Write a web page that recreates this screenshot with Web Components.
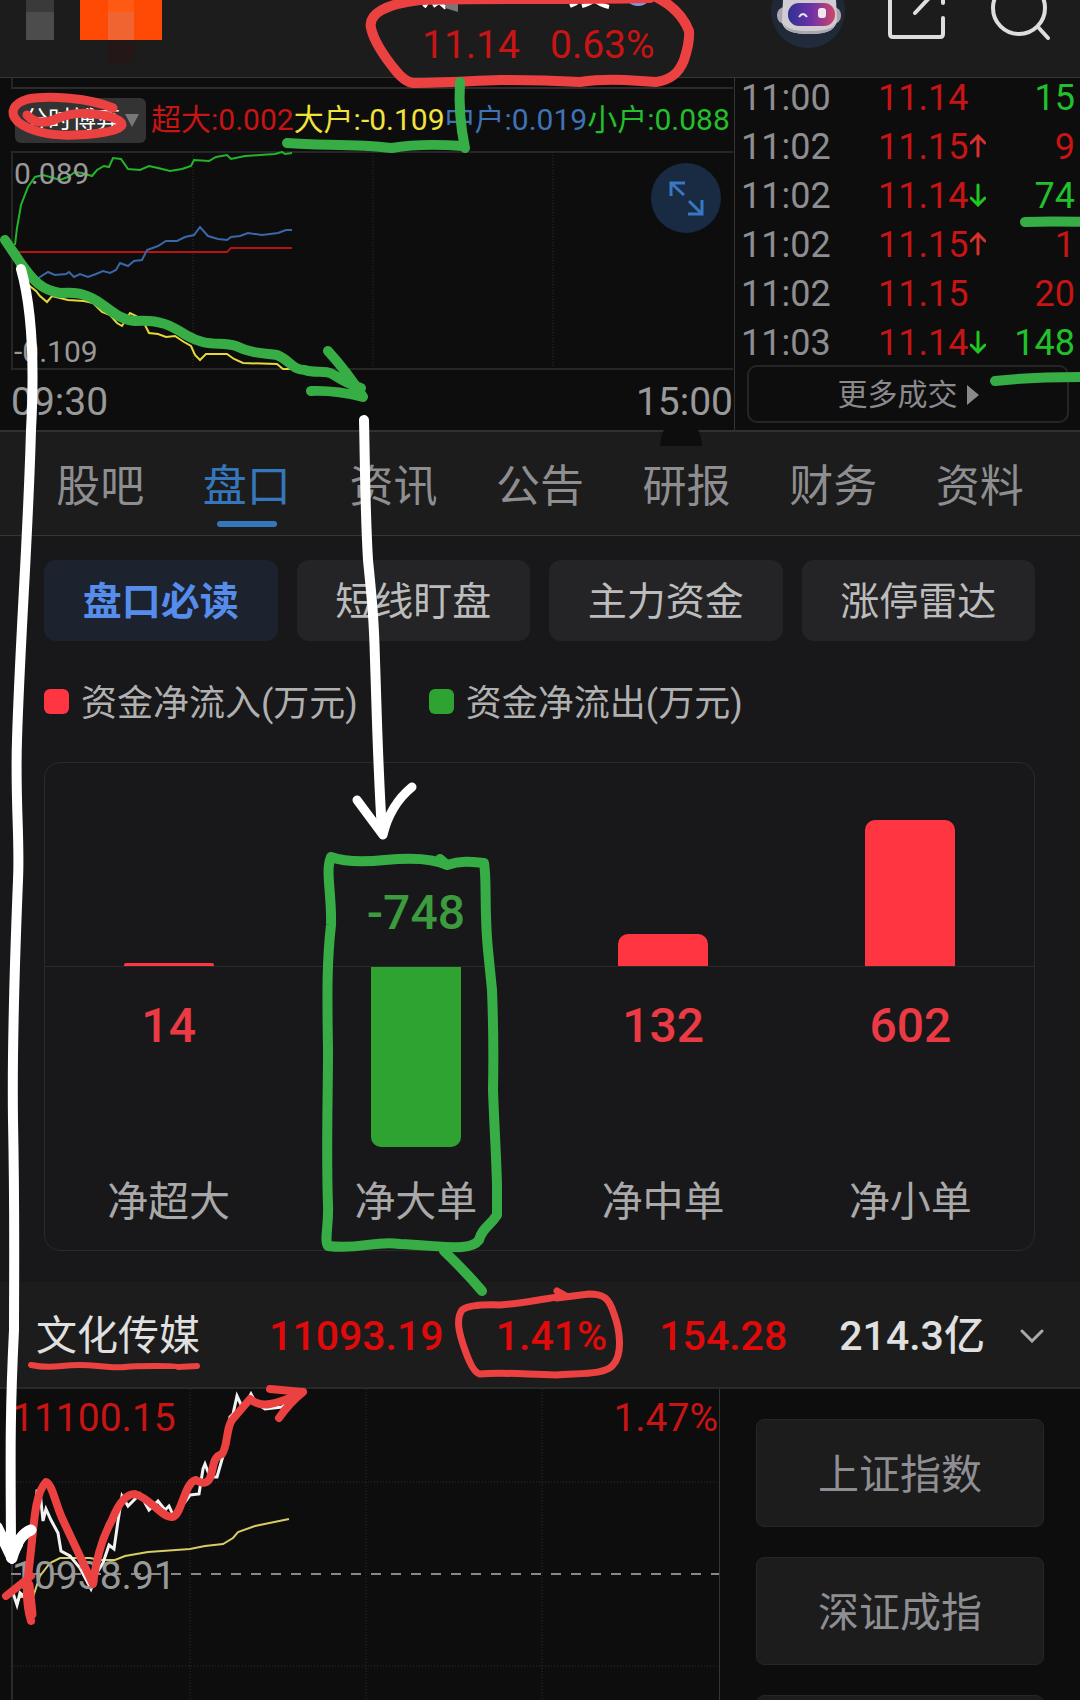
<!DOCTYPE html>
<html lang="zh-CN">
<head>
<meta charset="utf-8">
<meta name="viewport" content="width=device-width, initial-scale=1">
<title>盘口</title>
<style>
  html, body { margin: 0; height: 100%; }
  body {
    background: #18181a;
    color: #b0b0b0;
    font-family: Roboto, "Noto Sans CJK SC", sans-serif;
    overflow: hidden;
    --up: #c81414;
    --down: #22c02a;
    --line: #2e2e2e;
    --panel: #1c1c1c;
    --deep: #0d0d0d;
  }
</style>
</head>
<body>
<stock-page></stock-page>

<script>
const base = `
  *, *::before, *::after { box-sizing: border-box; }
  button, select { font: inherit; color: inherit; background: none; border: 0; margin: 0; padding: 0; appearance: none; cursor: pointer; }
  svg { display: block; }
`;

function element(name, css, html) {
  customElements.define(name, class extends HTMLElement {
    constructor() {
      super();
      const root = this.attachShadow({ mode: "open" });
      const t = document.createElement("template");
      t.innerHTML = `<style>${base}${css}</style>${typeof html === "function" ? html(this) : html}`;
      root.append(t.content.cloneNode(true));
    }
  });
}

/* Top bar: avatar blocks, price, actions */
element("quote-header", `
  :host { display: block; background: var(--panel); border-bottom: 1px solid #353535; }
  header { display: flex; align-items: flex-start; height: 77px; padding: 0 28px 0 26px; }
  .logo { flex: none; width: 136px; height: 66px; }
  .quote { flex: 1; display: flex; gap: 30px; padding: 25px 0 0 260px; font-size: 39px; line-height: 40px; color: var(--up); white-space: nowrap; }
  .actions { display: flex; align-items: flex-start; gap: 40px; }
`, `
  <header>
    <svg class="logo" viewBox="26 0 136 66" aria-hidden="true">
      <path fill="#3a3a3a" d="M26 0h28v12H26z"/><path fill="#4c4c4c" d="M26 12h28v28H26z"/>
      <path fill="#ff4a05" d="M80 0h82v40H80z"/><path fill="#ff5a14" d="M108 0h26v12h-26z"/><path fill="#f06432" d="M108 12h26v28h-26z"/>
      <path fill="#231817" d="M108 40h26v20l-26 6z"/>
    </svg>
    <div class="quote"><span>11.14</span><span>0.63%</span></div>
    <div class="actions">
      <button aria-label="助手">
        <svg width="76" height="50" viewBox="770 0 76 50">
          <defs>
            <linearGradient id="v"><stop offset="0" stop-color="#2f3192"/><stop offset=".5" stop-color="#6f33a8"/><stop offset="1" stop-color="#cf4668"/></linearGradient>
            <linearGradient id="c" x2="0" y2="1"><stop offset="0" stop-color="#1f2430"/><stop offset="1" stop-color="#212b3c"/></linearGradient>
          </defs>
          <circle cx="808" cy="11" r="37" fill="url(#c)"/>
          <rect x="777" y="7" width="64" height="17" rx="8" fill="#aaa6b0"/>
          <path fill="#d0ccd2" d="M783 0h53l1 18c0 11-8 16-28 16s-27-5-27-14z"/>
          <path fill="#aaa6ae" d="M784 24c4 6 12 7 25 7s22-1 26-7c-2 8-11 10-26 10s-24-3-25-10z"/>
          <rect x="788" y="3" width="47" height="23" rx="11" fill="url(#v)"/>
          <path d="M799 17q4-6 8 0" fill="none" stroke="#e8e4f6" stroke-width="2"/>
          <rect x="818" y="8" width="8" height="10" rx="3" fill="#f0e6f0"/>
        </svg>
      </button>
      <button aria-label="分享">
        <svg width="62" height="44" viewBox="886 0 62 44" fill="none" stroke="#dedede" stroke-width="4" stroke-linecap="round">
          <path d="M890-4V34q0 3 3 3h47q3 0 3-3V18M943-4V3M915 13 931-4"/>
        </svg>
      </button>
      <button aria-label="搜索">
        <svg width="64" height="44" viewBox="988 0 64 44" fill="none" stroke="#dedede" stroke-width="4" stroke-linecap="round">
          <circle cx="1019" cy="8" r="26"/><path d="m1038 27 10 11"/>
        </svg>
      </button>
    </div>
  </header>
`);

/* Intraday order-flow panel */
element("flow-panel", `
  :host { display: block; flex: 1; min-width: 0; padding: 0 1px 0 11px; }
  .tail { width: 100%; height: 11px; border-left: 2px solid #242424; border-bottom: 2px solid #2c2c2c; }
  .row { display: flex; align-items: center; height: 62px; padding-left: 4px; font-size: 30px; line-height: 40px; white-space: nowrap; }
  .pick { position: relative; flex: none; width: 131px; height: 45px; margin-right: 5px; background: #333; border-radius: 6px; }
  .pick select { width: 100%; height: 100%; padding-left: 9px; font-size: 24px; color: #fff; }
  .pick svg { position: absolute; right: 7px; top: 16px; pointer-events: none; }
  .plot { position: relative; height: 219px; }
  .plot > svg { width: 100%; height: 100%; }
  .plot path { vector-effect: non-scaling-stroke; }
  .mark { position: absolute; left: 3px; font-size: 30px; line-height: 32px; color: #999; }
  .hi { top: 7px; } .lo { bottom: 2px; }
  .zoom { position: absolute; right: 12px; top: 12px; }
  .axis { display: flex; justify-content: space-between; height: 60px; font-size: 39px; line-height: 64px; color: #999; }
`, `
  <div class="tail"></div>
  <div class="row">
    <div class="pick">
      <select aria-label="指标"><option>分时博弈</option></select>
      <svg width="14" height="13" viewBox="0 0 14 13" aria-hidden="true"><path fill="#777" d="M0 0h14L7 13z"/></svg>
    </div>
    <span style="color:#c81414">超大:0.002</span><span style="color:#f2e23c">大户:-0.109</span><span style="color:#3f73b5">中户:0.019</span><span style="color:#22c02a">小户:0.088</span>
  </div>
  <div class="plot">
    <svg viewBox="11 151 722 219" preserveAspectRatio="none" fill="none" aria-hidden="true">
      <path stroke="#262626" stroke-width="2" d="M733 152H12V369H733"/>
      <path stroke="#303030" stroke-dasharray="1 2" d="M193 152V369M373 152V369M553 152V369"/>
      <path stroke="#b81414" stroke-width="2" d="M15 252H227L231 248H292"/>
      <path stroke="#22b52a" stroke-width="2" d="M15 245 17 228 21 205 28 187 35 177 43 175 50 177 60 180 68 177 75 172 82 173 92 176 97 170 104 166 109 167 113 158 121 159 128 169 140 170 149 166 158 168 170 171 182 169 191 166 194 160 209 161 216 157 227 155 231 159 245 156 260 155 275 154 282 152 285 154 292 153"/>
      <path stroke="#3a67a6" stroke-width="2" d="M18 258 35 281 40 277 48 272 55 275 66 274 69 272 74 277 80 274 88 277 96 274 103 271 110 273 116 270 120 263 128 266 134 261 142 260 147 250 158 246 166 241 177 241 185 237 194 235 200 227 208 236 218 239 227 240 231 237 240 236 248 233 262 235 278 233 286 230 292 230"/>
      <path stroke="#e6d83a" stroke-width="2" d="M16 262 25 282 31 287 36 291 40 296 47 302 52 296 68 300 84 301 93 303 102 312 110 315 117 323 122 326 130 313 140 318 145 325 149 333 158 334 166 337 175 336 184 342 191 346 195 355 200 360 206 354 227 354 234 359 243 363 277 364 283 369 292 369"/>
    </svg>
    <span class="mark hi">0.089</span><span class="mark lo">-0.109</span>
    <button class="zoom" aria-label="全屏">
      <svg width="70" height="70" viewBox="0 0 70 70"><circle cx="35" cy="35" r="35" fill="#182b42"/>
      <path fill="none" stroke="#3877c2" stroke-width="3" d="M34 20H20V33M20 20 33 32M51 37V51H37M51 51 38 38"/></svg>
    </button>
  </div>
  <div class="axis"><span>09:30</span><span>15:00</span></div>
`);

/* Tick-by-tick trades */
const up = `<svg width="16" height="24" viewBox="0 0 16 24" fill="none" stroke="#d8312c" stroke-width="3" stroke-linecap="round"><path d="M8 22V3M1 9 8 2 15 9"/></svg>`;
const down = `<svg width="16" height="24" viewBox="0 0 16 24" fill="none" stroke="#1fc71f" stroke-width="3" stroke-linecap="round"><path d="M8 2V21M1 15 8 22 15 15"/></svg>`;
const trades = [
  ["11:00", "11.14", "", "15", "g"], ["11:02", "11.15", up, "9", "r"], ["11:02", "11.14", down, "74", "g"],
  ["11:02", "11.15", up, "1", "r"], ["11:02", "11.15", "", "20", "r"], ["11:03", "11.14", down, "148", "g"]
];
element("trade-list", `
  :host { display: block; flex: none; width: 346px; padding: 1px 5px 7px 6px; border-left: 1px solid #353535; }
  table { width: 100%; border-collapse: collapse; font-size: 36px; line-height: 38px; }
  td { padding: 0 0 11px; white-space: nowrap; }
  tr:last-child td { padding-bottom: 3px; }
  .t { width: 137px; color: #8e8e92; }
  .p { color: var(--up); }
  .p svg { display: inline-block; margin-left: 2px; vertical-align: 1px; }
  .q { text-align: right; }
  .g { color: var(--down); } .r { color: var(--up); }
  button { display: flex; align-items: center; justify-content: center; gap: 9px; width: calc(100% - 12px); height: 58px; margin: 0 6px; padding-top: 1px; border: 2px solid #252525; border-radius: 10px; font-size: 30px; line-height: 40px; color: #8a8a8d; }
`, `
  <table><tbody>${trades.map(([t, p, a, q, c]) => `<tr><td class="t">${t}</td><td class="p">${p}${a}</td><td class="q ${c}">${q}</td></tr>`).join("")}</tbody></table>
  <button>更多成交<svg width="12" height="20" viewBox="0 0 12 20" aria-hidden="true"><path fill="#8a8a8d" d="M0 0 12 10 0 20z"/></svg></button>
`);

/* Section tabs */
const tabs = ["股吧", "盘口", "资讯", "公告", "研报", "财务", "资料"];
element("section-tabs", `
  :host { display: block; position: relative; background: var(--panel); border-top: 2px solid #303030; border-bottom: 1px solid #353535; }
  nav { display: flex; padding: 0 27px; height: 103px; }
  button { flex: 1; display: flex; flex-direction: column; align-items: center; justify-content: flex-end; padding-bottom: 8px; gap: 8px; font-size: 44px; line-height: 52px; color: #8e8e91; white-space: nowrap; }
  button::after { content: ""; width: 60px; height: 6px; border-radius: 3px; }
  button.on { color: #3577bd; }
  button.on::after { background: #3577bd; }
  .notch { position: absolute; left: 61%; top: -2px; }
`, `
  <nav>${tabs.map((t, i) => `<button class="${i === 1 ? "on" : ""}">${t}</button>`).join("")}</nav>
  <svg class="notch" width="44" height="16" aria-hidden="true"><path fill="#0d0d0d" d="M5 0H39Q42 4 43 16H1Q2 4 5 0z"/></svg>
`);

element("pill-button", `
  :host { display: block; flex: 1; }
  button { width: 100%; height: 81px; padding-top: 2px; border-radius: 12px; background: #242426; color: #bcbcbc; font-size: 39px; line-height: 48px; white-space: nowrap; }
  :host([active]) button { background: #1c232e; color: #568cec; font-weight: 700; }
`, `<button><slot></slot></button>`);

element("legend-item", `
  :host { display: flex; align-items: center; gap: 12px; font-size: 36px; line-height: 44px; color: #b0b0b0; white-space: nowrap; }
  i { width: 25px; height: 25px; border-radius: 6px; background: var(--c); margin-bottom: 6px; }
`, `<i></i><span><slot></slot></span>`);

/* One column of the fund chart; the sign of value picks the direction */
element("fund-bar", `
  :host { display: flex; flex: 1; flex-direction: column; align-items: center; }
  .top, .bottom { display: flex; flex-direction: column; align-items: center; width: 100%; }
  .top { height: 204px; justify-content: flex-end; border-bottom: 1px solid #2a2a2c; }
  .bottom { height: 203px; }
  .bar { width: 90px; height: var(--h); border-radius: 10px 10px 0 0; background: #ff3541; }
  .thin { border-radius: 2px 2px 0 0; }
  .neg .bar { border-radius: 0 0 10px 10px; background: #2fa331; }
  b { font-size: 48px; line-height: 56px; font-weight: 500; color: #ec3a44; }
  .bottom b { margin-top: 31px; }
  .neg b { color: #3c9b3e; margin-bottom: 25px; }
  .name { padding: 8px 0 23px; font-size: 41px; line-height: 49px; color: #a9a9a9; white-space: nowrap; }
`, el => {
  const v = +el.getAttribute("value"), h = el.getAttribute("bar");
  const bar = `<div class="bar ${h < 10 ? "thin" : ""}" style="--h:${h}px"></div>`, n = `<b>${v}</b>`;
  return v < 0
    ? `<div class="top neg">${n}</div><div class="bottom neg">${bar}</div><div class="name"><slot></slot></div>`
    : `<div class="top">${bar}</div><div class="bottom">${n}</div><div class="name"><slot></slot></div>`;
});

element("fund-section", `
  :host { display: block; padding: 24px 45px 31px 44px; }
  .pills { display: flex; gap: 19px; }
  .legend { display: flex; gap: 71px; padding: 41px 0 36px; }
  .card { display: flex; border: 1px solid #2a2a2c; border-radius: 16px; }
`, `
  <div class="pills"><pill-button active>盘口必读</pill-button><pill-button>短线盯盘</pill-button><pill-button>主力资金</pill-button><pill-button>涨停雷达</pill-button></div>
  <div class="legend"><legend-item style="--c:#ff3541">资金净流入(万元)</legend-item><legend-item style="--c:#2fa331">资金净流出(万元)</legend-item></div>
  <div class="card">
    <fund-bar value="14" bar="3">净超大</fund-bar>
    <fund-bar value="-748" bar="180">净大单</fund-bar>
    <fund-bar value="132" bar="32">净中单</fund-bar>
    <fund-bar value="602" bar="146">净小单</fund-bar>
  </div>
`);

element("sector-bar", `
  :host { display: flex; align-items: center; justify-content: space-between; height: 107px; padding: 3px 36px 0; background: var(--panel); border-bottom: 2px solid #292929; font-size: 41px; line-height: 50px; font-weight: 500; color: #e00a0a; white-space: nowrap; }
  .name { font-weight: 400; color: #e0e0e0; margin-right: 17px; }
  .amt { color: #e0e0e0; margin-right: -17px; }
`, `
  <span class="name">文化传媒</span><span>11093.19</span><span>1.41%</span><span>154.28</span><span class="amt">214.3亿</span>
  <button aria-label="展开"><svg width="24" height="14" viewBox="0 0 24 14" fill="none" stroke="#aaa" stroke-width="3" stroke-linecap="round"><path d="M2 2 12 12 22 2"/></svg></button>
`);

element("sector-chart", `
  :host { display: block; position: relative; flex: 1; min-width: 0; margin-left: 11px; border-right: 1px solid #353535; font-size: 39px; line-height: 44px; }
  svg { width: 100%; height: 312px; }
  path { vector-effect: non-scaling-stroke; }
  span { position: absolute; color: var(--up); }
  .hi { left: 1px; top: 7px; } .pct { right: 1px; top: 7px; } .mid { left: 1px; top: 165px; color: #999; }
`, `
  <svg viewBox="11 1388 708 312" preserveAspectRatio="none" fill="none" aria-hidden="true">
    <path stroke="#292929" stroke-width="2" d="M12 1388V1700"/>
    <path stroke="#303030" stroke-dasharray="1 2" d="M190 1388V1700M366 1388V1700M542 1388V1700M11 1481H719M11 1665H719"/>
    <path stroke="#888" stroke-width="2" stroke-dasharray="10 10" d="M11 1573H719"/>
    <path stroke="#d8cc66" stroke-width="2" d="M17 1604 20 1596H33L40 1575 50 1562 60 1557H90L100 1559H115L125 1555 148 1551 190 1548 205 1545 223 1543 233 1537 238 1531 255 1525 289 1518"/>
    <path stroke="#f2f2f2" stroke-width="3" d="M13 1592 17 1604 20 1592 25 1596 30 1560 34 1540 37 1490 40 1490 43 1520 46 1508 51 1519 58 1532 61 1550 70 1555 80 1567 91 1588 98 1570 103 1562 109 1544 114 1548 118 1520 122 1495 128 1505 140 1493 149 1509 158 1500 165 1509 169 1505 174 1516 182 1505 190 1494 199 1493 203 1468 205 1463 210 1476 217 1476 223 1455 226 1440 230 1416 233 1413 237 1395 243 1408 251 1393 256 1402 265 1408 282 1406 290 1400"/>
  </svg>
  <span class="hi">11100.15</span><span class="pct">1.47%</span><span class="mid">10938.91</span>
`);

element("index-list", `
  :host { display: flex; flex: none; flex-direction: column; gap: 30px; width: 360px; padding: 30px 36px 0; }
  button { flex: none; height: 108px; padding-top: 4px; border: 1px solid #262626; border-radius: 8px; background: var(--panel); font-size: 41px; line-height: 50px; color: #8e8e93; }
`, `<button>上证指数</button><button>深证成指</button><button aria-label="更多指数"></button>`);

/* Freehand marks drawn above the page */
element("ink-layer", `
  :host { position: absolute; inset: 0; pointer-events: none; }
  svg { width: 100%; }
`, `
  <svg viewBox="0 0 1080 1700" fill="none" stroke-linecap="round" stroke-linejoin="round" aria-hidden="true">
    <g stroke="#fff" stroke-width="4" stroke-linecap="butt">
      <path d="M424 7 429 0M433 6 439 2 446 8M570 6 577 3M582 6Q590 4 594 0M594 0Q600 5 609 7"/>
    </g>
    <path fill="#777" d="M446 3H458V12L445 8z"/>
    <circle cx="638" cy="-8" r="14" fill="#7c9be6"/>
    <g stroke="#ec4141">
      <path stroke-width="10" d="M650-2C560 0 480-2 420 0C385 4 368 14 371 28C374 42 387 60 396 71Q405 82 413 83C440 83 470 81 500 80Q540 80 580 82Q600 79 625 80L656 82C671 80 679 73 684 60Q690 42 689 31C684 18 674 6 656-3"/>
      <path stroke-width="9" d="M27 115C34 123 44 124 56 119C68 114 80 112 94 114C112 116 122 120 122 125C120 131 100 134 75 135C50 136 30 131 18 122C8 112 14 103 28 99C48 95 90 98 113 108"/>
      <path stroke-width="6" d="M31 1365Q45 1368 62 1366T98 1366T125 1367T155 1366T178 1367L197 1366"/>
      <path stroke-width="7" d="M557 1291 566 1296C545 1298 528 1303 500 1305Q470 1304 462 1310C455 1320 460 1336 465 1350Q473 1373 480 1374C500 1372 520 1374 556 1375C580 1373 605 1375 613 1365C623 1354 620 1330 614 1314C609 1298 604 1294 589 1294L557 1298"/>
      <path stroke-width="8" d="M6 1596 31 1576M31 1621Q24 1598 29 1568C34 1528 34 1494 46 1482C52 1484 55 1502 62 1518L93 1584Q98 1545 112 1520Q122 1494 135 1494C150 1498 161 1517 172 1517C182 1516 184 1482 196 1480C202 1484 207 1484 210 1478C214 1468 212 1457 222 1454C228 1446 226 1428 232 1420L250 1399Q258 1406 270 1404T303 1392M270 1389 303 1392Q290 1402 279 1418"/>
      <path stroke-width="11" d="M28 1585 31 1614"/>
    </g>
    <g stroke="#36ae45" stroke-width="10">
      <path d="M460 82Q458 115 465 148M287 143C320 146 350 143 392 148Q420 143 463 146"/>
      <path d="M5 240 20 262C34 282 42 290 60 293C75 292 84 293 97 301C112 311 120 320 135 321C160 319 172 326 186 335C208 348 220 341 236 346C250 353 262 353 277 355C290 360 292 370 305 370C316 374 326 369 334 375Q348 384 361 388M328 351Q348 373 363 397Q335 390 311 391"/>
      <path d="M1025 222Q1050 221 1085 222M995 381Q1030 377 1085 377"/>
      <path d="M331 857C345 862 365 862 385 860S430 857 447 865L440 859M447 865C462 860 474 862 484 863C487 880 484 910 488 950L492 990Q494 1040 493 1090C494 1120 496 1150 497 1185V1215C490 1226 482 1228 479 1240C470 1252 445 1246 400 1244C375 1240 360 1250 328 1246C324 1240 329 1225 328 1205C326 1150 328 1100 328 1050C327 990 327 960 331 925C332 895 325 870 331 857"/>
      <path d="M444 1251Q466 1272 482 1291"/>
    </g>
    <g stroke="#fff">
      <path stroke-width="10" d="M21 269C34 315 34 375 31 430C28 540 20 640 17 740C15 800 20 840 18 880C14 980 12 1050 13 1120C15 1220 14 1270 14 1330C9 1430 11 1480 11 1558"/>
      <path stroke-width="11" d="M-3 1527 12 1558Q18 1535 31 1530"/>
      <path fill="#fff" stroke-width="6" d="M0 1535 12 1561 20 1545 10 1535z"/>
      <path stroke-width="10" d="M364 420C365 460 365 510 368 560C372 600 374 620 375 660C377 720 378 770 382 831"/>
      <path stroke-width="9" d="M357 800Q366 812 383 835Q390 805 412 787"/>
    </g>
  </svg>
`);

element("stock-page", `
  :host { display: flex; flex-direction: column; position: relative; height: 100vh; overflow: hidden; }
  quote-header, .live, section-tabs, fund-section, sector-bar { flex: none; }
  .live { display: flex; background: var(--deep); }
  .sector { flex: 1; min-height: 0; display: flex; overflow: hidden; background: var(--deep); }
`, `
  <quote-header></quote-header>
  <div class="live"><flow-panel></flow-panel><trade-list></trade-list></div>
  <section-tabs></section-tabs>
  <fund-section></fund-section>
  <sector-bar></sector-bar>
  <div class="sector"><sector-chart></sector-chart><index-list></index-list></div>
  <ink-layer></ink-layer>
`);
</script>
</body>
</html>
